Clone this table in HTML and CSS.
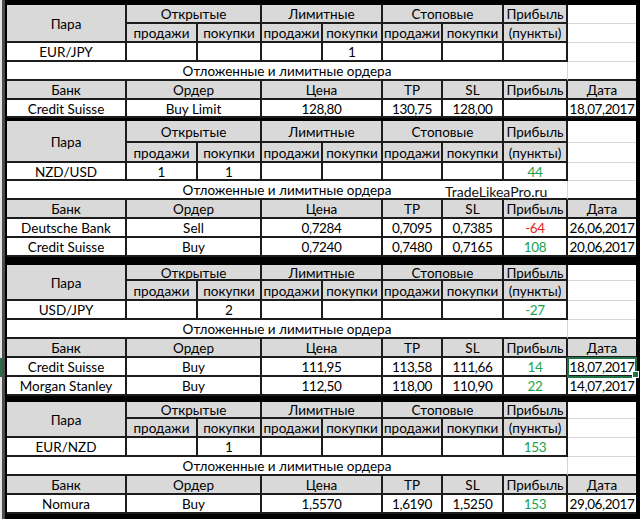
FILE: index.html
```html
<!DOCTYPE html>
<html lang="ru">
<head>
<meta charset="utf-8">
<title>Ордера</title>
<link rel="stylesheet" href="styles.css">
</head>
<body>
<div class="screen">
  <div class="gutter"><div class="gutter-sel"></div></div>
  <main class="sheet">

    <section class="block b1">
      <div class="c h r2">Пара</div>
      <div class="c h s2">Открытые</div>
      <div class="c h s2">Лимитные</div>
      <div class="c h s2">Стоповые</div>
      <div class="c h">Прибыль</div>
      <div class="c blank"></div>
      <div class="c h">продажи</div><div class="c h">покупки</div>
      <div class="c h">продажи</div><div class="c h">покупки</div>
      <div class="c h">продажи</div><div class="c h">покупки</div>
      <div class="c h">(пункты)</div>
      <div class="c blank"></div>
      <div class="c">EUR/JPY</div>
      <div class="c"></div><div class="c"></div>
      <div class="c"></div><div class="c">1</div>
      <div class="c"></div><div class="c"></div>
      <div class="c"></div>
      <div class="c blank"></div>
      <div class="c sub">Отложенные и лимитные ордера</div>
      <div class="c blank last"></div>
      <div class="c h">Банк</div>
      <div class="c h s2">Ордер</div>
      <div class="c h s2">Цена</div>
      <div class="c h">TP</div>
      <div class="c h">SL</div>
      <div class="c h">Прибыль</div>
      <div class="c h end">Дата</div>
      <div class="c">Credit Suisse</div>
      <div class="c s2">Buy Limit</div>
      <div class="c s2 n">128,80</div>
      <div class="c n">130,75</div>
      <div class="c n">128,00</div>
      <div class="c"></div>
      <div class="c end n">18,07,2017</div>
    </section>

    <section class="block b2">
      <div class="c h r2">Пара</div>
      <div class="c h s2">Открытые</div>
      <div class="c h s2">Лимитные</div>
      <div class="c h s2">Стоповые</div>
      <div class="c h">Прибыль</div>
      <div class="c blank"></div>
      <div class="c h">продажи</div><div class="c h">покупки</div>
      <div class="c h">продажи</div><div class="c h">покупки</div>
      <div class="c h">продажи</div><div class="c h">покупки</div>
      <div class="c h">(пункты)</div>
      <div class="c blank"></div>
      <div class="c">NZD/USD</div>
      <div class="c">1</div><div class="c">1</div>
      <div class="c"></div><div class="c"></div>
      <div class="c"></div><div class="c"></div>
      <div class="c g n">44</div>
      <div class="c blank"></div>
      <div class="c sub">Отложенные и лимитные ордера</div>
      <div class="mark">TradeLikeaPro.ru</div>
      <div class="c blank last"></div>
      <div class="c h">Банк</div>
      <div class="c h s2">Ордер</div>
      <div class="c h s2">Цена</div>
      <div class="c h">TP</div>
      <div class="c h">SL</div>
      <div class="c h">Прибыль</div>
      <div class="c h end">Дата</div>
      <div class="c">Deutsche Bank</div>
      <div class="c s2">Sell</div>
      <div class="c s2 n">0,7284</div>
      <div class="c n">0,7095</div>
      <div class="c n">0,7385</div>
      <div class="c r n">-64</div>
      <div class="c end n">26,06,2017</div>
      <div class="c">Credit Suisse</div>
      <div class="c s2">Buy</div>
      <div class="c s2 n">0,7240</div>
      <div class="c n">0,7480</div>
      <div class="c n">0,7165</div>
      <div class="c g n">108</div>
      <div class="c end n">20,06,2017</div>
    </section>

    <section class="block b3">
      <div class="c h r2">Пара</div>
      <div class="c h s2">Открытые</div>
      <div class="c h s2">Лимитные</div>
      <div class="c h s2">Стоповые</div>
      <div class="c h">Прибыль</div>
      <div class="c blank"></div>
      <div class="c h">продажи</div><div class="c h">покупки</div>
      <div class="c h">продажи</div><div class="c h">покупки</div>
      <div class="c h">продажи</div><div class="c h">покупки</div>
      <div class="c h">(пункты)</div>
      <div class="c blank"></div>
      <div class="c">USD/JPY</div>
      <div class="c"></div><div class="c">2</div>
      <div class="c"></div><div class="c"></div>
      <div class="c"></div><div class="c"></div>
      <div class="c g n">-27</div>
      <div class="c blank"></div>
      <div class="c sub">Отложенные и лимитные ордера</div>
      <div class="c blank last"></div>
      <div class="c h">Банк</div>
      <div class="c h s2">Ордер</div>
      <div class="c h s2">Цена</div>
      <div class="c h">TP</div>
      <div class="c h">SL</div>
      <div class="c h">Прибыль</div>
      <div class="c h end">Дата</div>
      <div class="c">Credit Suisse</div>
      <div class="c s2">Buy</div>
      <div class="c s2 n">111,95</div>
      <div class="c n">113,58</div>
      <div class="c n">111,66</div>
      <div class="c g n">14</div>
      <div class="c end n sel">18,07,2017</div>
      <div class="c">Morgan Stanley</div>
      <div class="c s2">Buy</div>
      <div class="c s2 n">112,50</div>
      <div class="c n">118,00</div>
      <div class="c n">110,90</div>
      <div class="c g n">22</div>
      <div class="c end n">14,07,2017</div>
    </section>

    <section class="block b4">
      <div class="c h r2">Пара</div>
      <div class="c h s2">Открытые</div>
      <div class="c h s2">Лимитные</div>
      <div class="c h s2">Стоповые</div>
      <div class="c h">Прибыль</div>
      <div class="c blank"></div>
      <div class="c h">продажи</div><div class="c h">покупки</div>
      <div class="c h">продажи</div><div class="c h">покупки</div>
      <div class="c h">продажи</div><div class="c h">покупки</div>
      <div class="c h">(пункты)</div>
      <div class="c blank"></div>
      <div class="c">EUR/NZD</div>
      <div class="c"></div><div class="c">1</div>
      <div class="c"></div><div class="c"></div>
      <div class="c"></div><div class="c"></div>
      <div class="c g n">153</div>
      <div class="c blank"></div>
      <div class="c sub">Отложенные и лимитные ордера</div>
      <div class="c blank last"></div>
      <div class="c h">Банк</div>
      <div class="c h s2">Ордер</div>
      <div class="c h s2">Цена</div>
      <div class="c h">TP</div>
      <div class="c h">SL</div>
      <div class="c h">Прибыль</div>
      <div class="c h end">Дата</div>
      <div class="c">Nomura</div>
      <div class="c s2">Buy</div>
      <div class="c s2 n">1,5570</div>
      <div class="c n">1,6190</div>
      <div class="c n">1,5250</div>
      <div class="c g n">153</div>
      <div class="c end n">29,06,2017</div>
    </section>

  </main>
</div>
</body>
</html>
```

FILE: styles.css
```css
html, body {
  margin: 0;
  padding: 0;
  background: #000;
}

body {
  font-family: "Lato", "Liberation Sans", sans-serif;
  font-size: 13.5px;
  color: #000;
}

.screen {
  display: flex;
  width: 640px;
  height: 519px;
  overflow: hidden;
}

.gutter {
  position: relative;
  width: 5px;
  flex: none;
  background: linear-gradient(to right, #e4e4e4 0 2px, #4d4d4d 2px 5px);
}

.gutter-sel {
  position: absolute;
  left: 0;
  top: 358px;
  width: 2px;
  height: 19px;
  background: #217346;
}

.sheet {
  flex: 1;
  background: #000;
  padding: 5px 4px 0 2px;
  display: flex;
  flex-direction: column;
}

.block {
  display: grid;
  grid-template-columns: 120px 71px 64px 61px 60px 60px 61px 64px 68px;
  background: #fff;
}

.b1 { grid-template-rows: 19px 19px 19px 19px 19px 18px; margin-bottom: 3px; }
.b2 { grid-template-rows: 22px 20px 18px 19px 19px 19px 19px; margin-bottom: 8px; }
.b3 { grid-template-rows: 16px 20px 19px 19px 19px 19px 19px; margin-bottom: 6px; }
.b4 { grid-template-rows: 17px 19px 19px 19px 19px 19px; }

.c {
  box-sizing: border-box;
  display: flex;
  align-items: center;
  justify-content: center;
  white-space: nowrap;
  overflow: hidden;
  border-right: 2px solid #1c1c1c;
  border-bottom: 2px solid #1c1c1c;
  padding-top: 3px;
  line-height: 1;
}

.h { background: #d9d9d9; }

.s2 { grid-column: span 2; }
.r2 { grid-row: span 2; }

.n { letter-spacing: -0.4px; }

.blank {
  border-right: none;
  border-bottom: 1px solid #d6d6d6;
}

.blank.last {
  border-bottom: 2px solid #1c1c1c;
}

.end { border-right: none; }

.sub {
  grid-row: 4;
  grid-column: 1 / 9;
  border-right: 1px solid #d6d6d6;
}

.g { color: #21a24a; }
.r { color: #e3261f; }

.mark {
  grid-row: 4;
  grid-column: 7 / 9;
  align-self: center;
  justify-self: start;
  padding-left: 2px;
  padding-top: 2px;
  font-size: 14px;
  line-height: 1;
  color: #111;
  white-space: nowrap;
  z-index: 1;
}

.sel {
  position: relative;
  overflow: visible;
  outline: 2px solid #217346;
  outline-offset: -1px;
  z-index: 2;
}

.sel::after {
  content: "";
  position: absolute;
  right: -3px;
  bottom: -3px;
  width: 5px;
  height: 5px;
  background: #217346;
  border: 1px solid #fff;
}
```
